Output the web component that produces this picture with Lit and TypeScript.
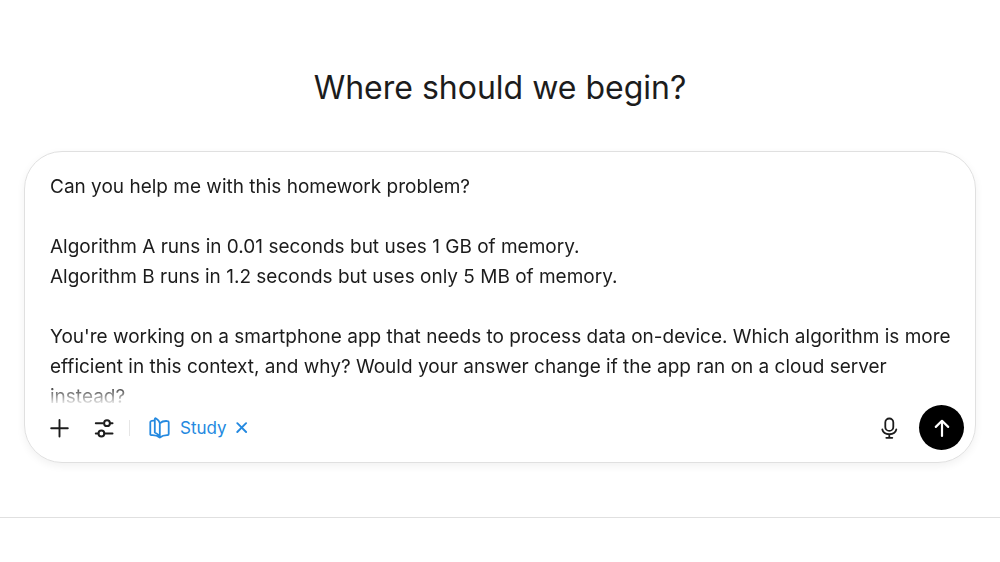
import { LitElement, html, css } from "lit";
import { customElement, state } from "lit/decorators.js";

const PROMPT = `Can you help me with this homework problem?

Algorithm A runs in 0.01 seconds but uses 1 GB of memory.
Algorithm B runs in 1.2 seconds but uses only 5 MB of memory.

You're working on a smartphone app that needs to process data on-device. Which algorithm is more efficient in this context, and why? Would your answer change if the app ran on a cloud server instead?`;

@customElement("app-root")
export class AppRoot extends LitElement {
  static styles = css`
    :host {
      display: block;
      min-height: 100vh;
      background: #fff;
      color: #1c1c1c;
      font-family: Inter, "Liberation Sans", sans-serif;
    }
    * { box-sizing: border-box; }
    main {
      padding: 66px 24px 54px;
      border-bottom: 1px solid #e0e0e0;
    }
    h1 {
      margin: 0 0 41px;
      text-align: center;
      font-size: 32px;
      line-height: 44px;
      font-weight: 400;
    }
    .composer {
      border: 1px solid #e0e0e0;
      border-radius: 38px;
      box-shadow: 0 3px 8px rgba(0, 0, 0, 0.06);
      padding: 20px 11px 12px 25px;
    }
    textarea {
      display: block;
      width: 100%;
      height: 233px;
      padding: 0;
      border: 0;
      outline: 0;
      resize: none;
      overflow: hidden;
      background: none;
      color: inherit;
      font: 400 19px/30px Inter, "Liberation Sans", sans-serif;
      mask-image: linear-gradient(#000 212px, transparent 234px);
    }
    .bar { display: flex; align-items: center; }
    button {
      display: flex;
      align-items: center;
      padding: 0;
      border: 0;
      background: none;
      color: inherit;
      font: inherit;
    }
    svg { display: block; fill: none; stroke: currentColor; }
    .tools { margin-left: 23px; }
    .divider { width: 1px; height: 16px; margin: 0 19px 0 14px; background: #e6e6e6; }
    .study { gap: 9px; color: #2489e0; font-size: 17px; line-height: 24px; }
    .mic { margin-left: auto; }
    .send {
      width: 45px;
      height: 45px;
      margin-left: 19px;
      justify-content: center;
      border-radius: 50%;
      background: #000;
      color: #fff;
    }
  `;

  @state() private text = PROMPT;

  render() {
    return html`
      <main>
        <h1>Where should we begin?</h1>
        <form class="composer" @submit=${(e: Event) => e.preventDefault()}>
          <textarea
            aria-label="Message"
            spellcheck="false"
            .value=${this.text}
            @input=${(e: Event) => (this.text = (e.target as HTMLTextAreaElement).value)}
          ></textarea>
          <div class="bar">
            <button type="button" aria-label="Add files">
              <svg width="20" height="20" viewBox="0 0 20 20" stroke-width="1.9" stroke-linecap="round"><path d="M9.500 2v16.500M1.200 10.200h16.600" /></svg>
            </button>
            <button type="button" class="tools" aria-label="Tools">
              <svg width="22" height="22" viewBox="0 0 22 22" stroke-width="2" stroke-linecap="round"><path d="M2.800 6.200h7M17 6.200h2.500M2.800 16.500h2.500M11.500 16.500h8" /><circle cx="14" cy="6.200" r="2.900" /><circle cx="8.400" cy="16.500" r="2.900" /></svg>
            </button>
            <span class="divider"></span>
            <button type="button" class="study">
              <svg width="22" height="22" viewBox="0 0 22 22" stroke-width="1.800" stroke-linejoin="round" stroke-linecap="round"><path d="M10.800 6.200v14.300C10.300 18.200 8.500 16.700 5.800 15.500V2.200c0-1 .6-1.200 1.300-.7 2.200 1.300 3.400 2.700 3.700 4.700zM5.800 3.700C4.500 3.500 3 3.600 2.200 4q-.9.300-.9 1.200v12q0 1 1 .9c3.200-.3 6 .3 8.500 2.400M10.800 6.200c2.300-1.900 5-2.400 7.700-2.100q1.200.1 1.200 1.200v11.800q0 1-1.100 1c-3-.1-5.400.4-7.800 2.400" /></svg>
              <span>Study</span>
              <svg width="13" height="13" viewBox="0 0 13 13" stroke-width="1.900" stroke-linecap="round"><path d="M1.300 2.200l8.800 8.800M10.100 2.200L1.300 11" /></svg>
            </button>
            <button type="button" class="mic" aria-label="Dictate">
              <svg width="22" height="22" viewBox="0 0 22 22" stroke-width="1.800" stroke-linecap="round"><rect x="7.300" y="1.500" width="8" height="12.400" rx="4" /><path d="M4.300 12.500c1.500 6.300 12.500 6.300 14 0M11.300 17.300v3.400M8.300 20.800h6" /></svg>
            </button>
            <button class="send" aria-label="Send">
              <svg width="20" height="20" viewBox="0 0 20 20" stroke-width="2.200" stroke-linecap="round" stroke-linejoin="round"><path d="M10 18V2.800M3.800 8.900L10 2.800l6.200 6.100" /></svg>
            </button>
          </div>
        </form>
      </main>
    `;
  }
}
